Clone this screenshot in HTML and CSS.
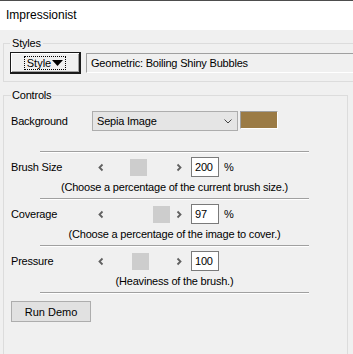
FILE: index.html
```html
<!DOCTYPE html>
<html lang="en">
<head>
    <meta charset="UTF-8">
    <title>Impressionist</title>
    <link rel="stylesheet" href="styles.css">
</head>
<body>
    <div class="titlebar">Impressionist</div>

    <fieldset class="group group-styles">
        <legend>Styles</legend>
        <div class="style-row">
            <button class="style-btn">
                <span class="focus">Style<svg class="tri" width="11" height="6" viewBox="0 0 11 6"><polygon points="0,0 11,0 5.5,6" fill="#000"/></svg></span>
            </button>
            <div class="style-name">Geometric: Boiling Shiny Bubbles</div>
        </div>
    </fieldset>

    <fieldset class="group group-controls">
        <legend>Controls</legend>

        <div class="row row-bg">
            <span class="label">Background</span>
            <div class="select">
                <span>Sepia Image</span>
                <svg width="8" height="5" viewBox="0 0 8 5"><polyline points="0.5,0.5 4,4 7.5,0.5" fill="none" stroke="#444" stroke-width="1"/></svg>
            </div>
            <div class="swatch"></div>
        </div>

        <div class="sep"></div>
        <div class="setting">
            <div class="row">
                <span class="label">Brush Size</span>
                <div class="slider">
                    <span class="arrow"><svg width="17" height="17" viewBox="0 0 17 17"><polyline points="9.5,5.5 6.5,8.5 9.5,11.5" fill="none" stroke="#606060" stroke-width="1.8"/></svg></span>
                    <div class="track"><div class="thumb" style="margin-left:20px"></div></div>
                    <span class="arrow"><svg width="17" height="17" viewBox="0 0 17 17"><polyline points="7.5,5.5 10.5,8.5 7.5,11.5" fill="none" stroke="#606060" stroke-width="1.8"/></svg></span>
                </div>
                <div class="num">200</div>
                <span class="unit">%</span>
            </div>
            <div class="hint">(Choose a percentage of the current brush size.)</div>
        </div>

        <div class="sep"></div>
        <div class="setting">
            <div class="row">
                <span class="label">Coverage</span>
                <div class="slider">
                    <span class="arrow"><svg width="17" height="17" viewBox="0 0 17 17"><polyline points="9.5,5.5 6.5,8.5 9.5,11.5" fill="none" stroke="#606060" stroke-width="1.8"/></svg></span>
                    <div class="track"><div class="thumb" style="margin-left:43px"></div></div>
                    <span class="arrow"><svg width="17" height="17" viewBox="0 0 17 17"><polyline points="7.5,5.5 10.5,8.5 7.5,11.5" fill="none" stroke="#606060" stroke-width="1.8"/></svg></span>
                </div>
                <div class="num">97</div>
                <span class="unit">%</span>
            </div>
            <div class="hint">(Choose a percentage of the image to cover.)</div>
        </div>

        <div class="sep"></div>
        <div class="setting">
            <div class="row">
                <span class="label">Pressure</span>
                <div class="slider">
                    <span class="arrow"><svg width="17" height="17" viewBox="0 0 17 17"><polyline points="9.5,5.5 6.5,8.5 9.5,11.5" fill="none" stroke="#606060" stroke-width="1.8"/></svg></span>
                    <div class="track"><div class="thumb" style="margin-left:22px"></div></div>
                    <span class="arrow"><svg width="17" height="17" viewBox="0 0 17 17"><polyline points="7.5,5.5 10.5,8.5 7.5,11.5" fill="none" stroke="#606060" stroke-width="1.8"/></svg></span>
                </div>
                <div class="num">100</div>
            </div>
            <div class="hint">(Heaviness of the brush.)</div>
        </div>

        <div class="sep"></div>
        <button class="run">Run Demo</button>
    </fieldset>
</body>
</html>
```

FILE: styles.css
```css
* {
    box-sizing: border-box;
    margin: 0;
    padding: 0;
}
body {
    font-family: "Liberation Sans", Arial, sans-serif;
    font-size: 11px;
    letter-spacing: -0.2px;
    color: #000;
    background: #f0f0f0;
    overflow: hidden;
    height: 354px;
}

/* window title */
.titlebar {
    height: 30px;
    border-top: 1px solid #4d4d4d;
    background: #fff;
    font-size: 12px;
    letter-spacing: 0;
    line-height: 29px;
    padding-left: 6px;
}

/* group boxes */
.group {
    border: 1px solid #dcdcdc;
    margin-left: 3px;
}
.group legend {
    line-height: 13px;
    padding: 0 2px;
}
.group-styles {
    margin-top: 7px;
    width: 350px;
    border-right: none;
    padding: 2px 0 7px 6px;
}
.group-controls {
    margin-top: 7px;
    width: 345px;
    height: 265px;
    border-bottom: none;
    padding: 9px 0 0 7px;
}
.group-controls legend {
    padding: 0 1px;
}

.style-row {
    display: flex;
    align-items: flex-start;
}
.style-btn {
    width: 71px;
    height: 22px;
    font: inherit;
    background: #f0f0f0;
    border: 1px solid #1a1a1a;
    border-bottom-width: 2px;
    border-right-width: 2px;
    box-shadow: inset 1px 1px 0 #fff, inset -1px -1px 0 #a0a0a0;
    display: flex;
    justify-content: center;
    align-items: center;
}
.focus {
    display: flex;
    align-items: center;
    border: 1px dotted #000;
    padding: 0 2px 0 2px;
    height: 14px;
    line-height: 12px;
}
.tri {
    margin-left: 1px;
}
.style-name {
    margin-left: 5px;
    margin-top: 1px;
    flex: 1;
    height: 20px;
    line-height: 18px;
    padding-left: 4px;
    border-top: 1px solid #a0a0a0;
    border-left: 1px solid #a0a0a0;
    border-bottom: 1px solid #fff;
}

/* control rows */
.row {
    display: flex;
    align-items: center;
    height: 20px;
}
.label {
    width: 82px;
}
.row-bg {
    align-items: flex-start;
    line-height: 20px;
}
.row-bg .label {
    width: 81px;
}
.select {
    width: 146px;
    height: 20px;
    border: 1px solid #adadad;
    background: #e5e5e5;
    display: flex;
    align-items: center;
    justify-content: space-between;
    padding: 0 5px 0 4px;
}
.swatch {
    width: 38px;
    height: 18px;
    margin-left: 2px;
    background: #9b7b45;
    border: 1px solid;
    border-color: #a0a0a0 #fff #fff #a0a0a0;
}

.sep {
    margin-left: 29px;
    width: 269px;
    border-top: 1px solid #a0a0a0;
    border-bottom: 1px solid #fff;
}
.row-bg + .sep {
    margin-top: 20px;
}
.setting {
    padding: 4px 0 4px;
}

.slider {
    display: flex;
    width: 94px;
    height: 17px;
}
.arrow {
    width: 17px;
    height: 17px;
}
.arrow svg {
    display: block;
}
.track {
    flex: 1;
}
.thumb {
    width: 17px;
    height: 17px;
    background: #cdcdcd;
}
.num {
    width: 28px;
    height: 20px;
    margin-left: 4px;
    border: 1px solid #7a7a7a;
    background: #fff;
    padding-left: 3px;
    line-height: 18px;
}
.unit {
    margin-left: 5px;
}
.hint {
    width: 269px;
    margin: 3px 0 0 29px;
    text-align: center;
    line-height: 14px;
}

.run {
    margin-top: 7px;
    width: 80px;
    height: 21px;
    font: inherit;
    background: #e1e1e1;
    border: 1px solid #adadad;
}
```
